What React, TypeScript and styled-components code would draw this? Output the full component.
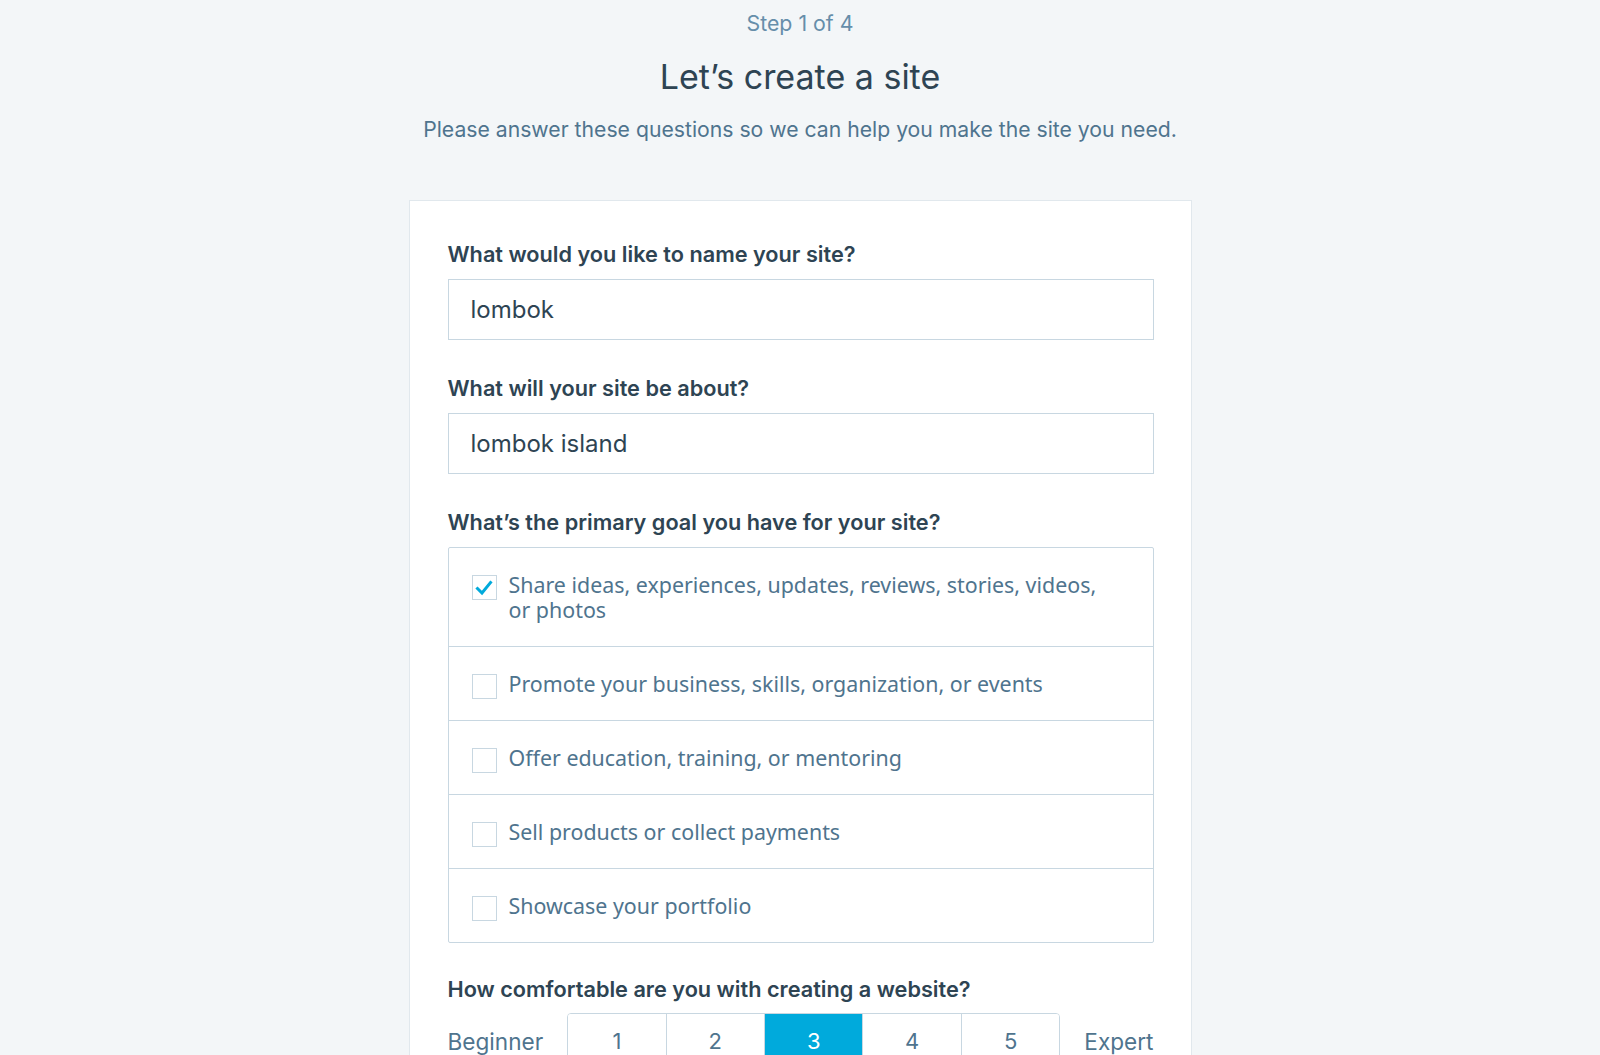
import React from "react";
import styled, { createGlobalStyle } from "styled-components";

const Global = createGlobalStyle`
  html, body { margin: 0; padding: 0; background: #f3f6f8; }
  body { font-family: Inter, Roboto, "Liberation Sans", sans-serif; -webkit-font-smoothing: antialiased; }
  * { box-sizing: border-box; }
`;

const Page = styled.div`
  display: flex;
  flex-direction: column;
  align-items: center;
  padding-top: 9px;
  min-height: 1055px;
`;

const Step = styled.div`
  font-size: 21.3px;
  line-height: 28px;
  color: #668eaa;
`;

const Title = styled.h1`
  margin: 18px 0 0;
  font-size: 34px;
  line-height: 44px;
  font-weight: 400;
  color: #2e4453;
`;

const Subtitle = styled.p`
  margin: 16px 0 0;
  font-size: 21.2px;
  line-height: 28px;
  color: #4f748e;
`;

const Card = styled.div`
  margin-top: 57px;
  width: 783px;
  background: #fff;
  border: 1px solid #e1e8ed;
  padding: 39px 37px 39px 38px;
  display: flex;
  flex-direction: column;
`;

const Label = styled.label<{ $first?: boolean; $tight?: boolean }>`
  font-size: 21.7px;
  line-height: 28px;
  font-weight: 600;
  color: #2e4453;
  margin-top: ${(p) => (p.$first ? "0" : p.$tight ? "32px" : "34px")};
  margin-bottom: 11px;
`;

const Input = styled.div`
  height: 61px;
  border: 1px solid #c8d7e1;
  display: flex;
  align-items: center;
  padding: 0 22px;
  font-size: 24px;
  color: #2e4453;
`;

const Options = styled.div`
  border: 1px solid #c8d7e1;
  border-radius: 2px;
  display: flex;
  flex-direction: column;
`;

const Option = styled.div<{ $first?: boolean }>`
  display: flex;
  align-items: flex-start;
  gap: 12px;
  padding: 24px 40px 24px 23px;
  border-top: ${(p) => (p.$first ? "none" : "1px solid #c8d7e1")};
  font-family: "Noto Sans", "Open Sans", sans-serif;
  font-size: 21.4px;
  line-height: 25px;
  color: #4f748e;
`;

const Box = styled.span`
  flex: none;
  width: 25px;
  height: 25px;
  margin: 3px 0 -3px;
  border: 1px solid #c8d7e1;
  background: #fff;
  display: flex;
  align-items: center;
  justify-content: center;
`;

const ScaleRow = styled.div`
  display: flex;
  align-items: center;
  gap: 24px;
  font-size: 22.6px;
  color: #4f748e;
  margin-top: -1px;
`;

const ScaleGroup = styled.div`
  flex: 1;
  display: flex;
  border: 1px solid #c8d7e1;
  border-radius: 4px;
  overflow: hidden;
  height: 56px;
`;

const ScaleButton = styled.div<{ $active?: boolean }>`
  flex: 1;
  display: flex;
  align-items: center;
  justify-content: center;
  font-size: 22px;
  color: ${(p) => (p.$active ? "#fff" : "#4f748e")};
  background: ${(p) => (p.$active ? "#00aadc" : "#fff")};
  & + & { border-left: 1px solid #c8d7e1; }
`;

const goals = [
  "Share ideas, experiences, updates, reviews, stories, videos, or photos",
  "Promote your business, skills, organization, or events",
  "Offer education, training, or mentoring",
  "Sell products or collect payments",
  "Showcase your portfolio",
];

export default function App() {
  return (
    <>
      <Global />
      <Page>
        <Step>Step 1 of 4</Step>
        <Title>Let’s create a site</Title>
        <Subtitle>Please answer these questions so we can help you make the site you need.</Subtitle>
        <Card>
          <Label $first>What would you like to name your site?</Label>
          <Input>lombok</Input>
          <Label>What will your site be about?</Label>
          <Input>lombok island</Input>
          <Label>What’s the primary goal you have for your site?</Label>
          <Options>
            {goals.map((g, i) => (
              <Option key={g} $first={i === 0}>
                <Box>
                  {i === 0 && (
                    <svg width="20" height="20" viewBox="0 0 20 20">
                      <path d="M3.5 10.5 L8 15 L16.5 4.5" fill="none" stroke="#00aadc" strokeWidth="3" strokeLinecap="square" />
                    </svg>
                  )}
                </Box>
                <span>{g}</span>
              </Option>
            ))}
          </Options>
          <Label $tight>How comfortable are you with creating a website?</Label>
          <ScaleRow>
            <span>Beginner</span>
            <ScaleGroup>
              {[1, 2, 3, 4, 5].map((n) => (
                <ScaleButton key={n} $active={n === 3}>{n}</ScaleButton>
              ))}
            </ScaleGroup>
            <span>Expert</span>
          </ScaleRow>
        </Card>
      </Page>
    </>
  );
}
